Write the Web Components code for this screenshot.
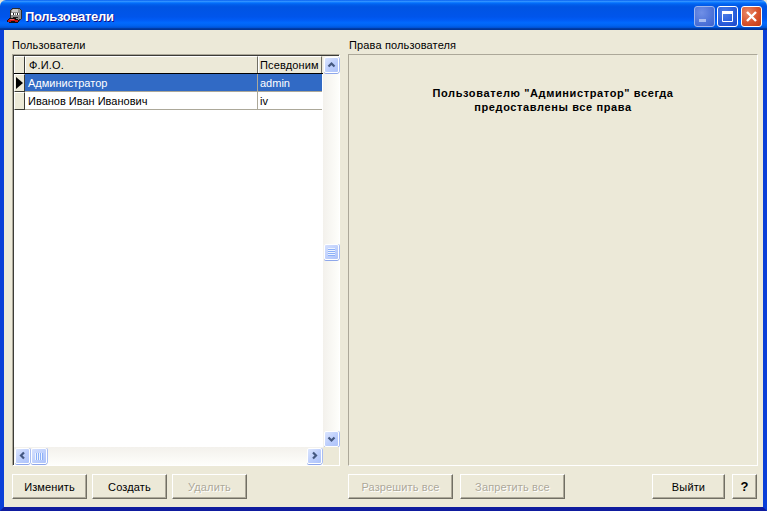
<!DOCTYPE html>
<html><head><meta charset="utf-8">
<style>
html,body{margin:0;padding:0;background:#e8e6d8;overflow:hidden}
body{width:767px;height:511px;font:11px "Liberation Sans",Arial,sans-serif;color:#000;letter-spacing:.14px}
</style></head><body>
<xp-window title="Пользователи">
  <xp-pane slot="left" label="Пользователи">
    <data-grid>
      <grid-row slot="rows" selected name="Администратор" nick="admin"></grid-row>
      <grid-row slot="rows" name="Иванов Иван Иванович" nick="iv"></grid-row>
    </data-grid>
  </xp-pane>
  <xp-pane slot="right" label="Права пользователя">
    <rights-panel>Пользователю "Администратор" всегда<br>предоставлены все права</rights-panel>
  </xp-pane>
  <xp-button slot="b1" style="width:75px">Изменить</xp-button>
  <xp-button slot="b1" style="width:75px">Создать</xp-button>
  <xp-button slot="b1" style="width:75px" disabled>Удалить</xp-button>
  <xp-button slot="b2" style="width:105px" disabled>Разрешить все</xp-button>
  <xp-button slot="b2" style="width:105px" disabled>Запретить все</xp-button>
  <xp-button slot="b3" style="width:73px">Выйти</xp-button>
  <xp-button slot="b3" style="width:25px"><b>?</b></xp-button>
</xp-window>
<script>
function def(name, css, html){
  customElements.define(name, class extends HTMLElement{
    connectedCallback(){
      if(this.shadowRoot) return;
      const r=this.attachShadow({mode:'open'});
      const h=typeof html==='function'?html(this):html;
      r.innerHTML='<style>'+css+'</style>'+h;
    }
  });
}
const esc=s=>(s||'').replace(/&/g,'&amp;').replace(/</g,'&lt;');

def('app-icon',':host{display:block;width:16px;height:16px;margin-top:2px}svg{display:block}',
`<svg width="16" height="16" viewBox="0 0 16 16" shape-rendering="crispEdges">
<path fill="#2e2e2e" d="M5 0h8v1h1v1h1v9h-1v1h-1v1H5v-1H4v-2H3V2h1V1h1z"/>
<path fill="#8e8e8e" d="M5 1h8v1h1v9h-2v1H6v-1H5v-1H4V2h1z"/>
<path fill="#c9c9c9" d="M6 1h5v3H5V2h1z"/>
<path fill="#fff" d="M4 5h4v2H4zM9 5h3v2H9z"/>
<path fill="#1c1c1c" d="M6 5h1v2H6zM10 5h1v2h-1zM6 9h5v1H6z"/>
<path fill="#111" d="M2 10h7v1h2v1h1v2h-1v1H2v-1H0v-2h1v-1h1z"/>
<path fill="#c81414" d="M2 11h6v1h3v2H8v-1H4v1H1v-2h1z"/>
<path fill="#ef6a6a" d="M3 11h4v1H3z"/>
</svg>`);

def('cap-button',`
:host{display:block;width:21px;height:21px;box-sizing:border-box;border:1px solid #fff;border-radius:3px;
background:radial-gradient(circle at 35% 30%,#4f7fe8 0,#2a5fdc 55%,#1c45c8 100%)}
:host([kind=min]){border-color:#9db5ee;background:radial-gradient(circle at 35% 30%,#6f8fe6 0,#4e73d8 60%,#3f62cc 100%)}
:host([kind=close]){background:radial-gradient(circle at 30% 30%,#e98a6a 0,#d8532c 55%,#c23a14 100%)}
svg{display:block}`,
t=>{const k=t.getAttribute('kind');
 const p=k==='min'?'<path fill="#a9bdf0" d="M4 12h7v3H4z"/>':
 k==='max'?'<path fill="none" stroke="#fff" d="M4.5 5.5h10v9h-10z"/><path fill="#fff" d="M4 4h11v3H4z"/>':
 '<path fill="none" stroke="#fff" stroke-width="2.4" d="M5 5l9 9M14 5l-9 9"/>';
 return `<svg width="19" height="19" viewBox="0 0 19 19">${p}</svg>`;});

def('xp-titlebar',`
:host{display:flex;align-items:center;height:30px;box-sizing:border-box;padding:0 5px 0 7px;
border-radius:6px 6px 0 0;
background:linear-gradient(180deg,#0058ee 0,#3593ff 4%,#288eff 6%,#127dff 8%,#036ffc 10%,#0262ee 14%,#0057e5 20%,#0054e3 24%,#0055eb 56%,#005bf5 66%,#026afe 76%,#0062ef 86%,#0052d6 92%,#0040ab 94%,#003092 100%)}
.t{margin:2px 0 0 2px;color:#fff;font:bold 13px "Liberation Sans",Arial,sans-serif;letter-spacing:-.3px;text-shadow:1px 1px #0f1089;flex:1;white-space:nowrap}
.b{display:flex;gap:2px;margin-top:2px}`,
t=>`<app-icon></app-icon><div class="t">${esc(t.getAttribute('title'))}</div>
<div class="b"><cap-button kind="min"></cap-button><cap-button kind="max"></cap-button><cap-button kind="close" style="margin-left:1px"></cap-button></div>`);

def('xp-window',`
:host{display:flex;flex-direction:column;width:767px;height:511px;box-sizing:border-box}
.body{flex:1;display:flex;border:solid #0831d9;border-width:0 4px 4px;background:#ece9d8;border-bottom-color:#0f1c9e;
border-left-color:#0a3fd8;border-right-color:#0a3fd8;
padding:8px 5px 8px 8px;flex-direction:column;gap:8px;min-height:0}
.main{flex:1;display:grid;grid-template-columns:328px 410px;gap:8px;min-height:0}
.btns{display:flex;height:25px}
.g{display:flex;gap:5px}
.g2{margin-left:101px;gap:7px}
.g3{margin-left:auto;gap:7px;margin-right:1px}`,
t=>`<xp-titlebar title="${esc(t.getAttribute('title'))}"></xp-titlebar>
<div class="body">
<div class="main"><slot name="left"></slot><slot name="right"></slot></div>
<div class="btns"><div class="g"><slot name="b1"></slot></div><div class="g g2"><slot name="b2"></slot></div><div class="g g3"><slot name="b3"></slot></div></div>
</div>`);

def('xp-pane',`
:host{display:flex;flex-direction:column;min-height:0;min-width:0}
.l{height:16px;line-height:14px;white-space:nowrap}
:host([slot=right]) .l{padding-left:1px}
.c{flex:1;display:flex;min-height:0}`,
t=>`<div class="l">${esc(t.getAttribute('label'))}</div><div class="c"><slot></slot></div>`);

def('xp-button',`
:host{display:flex;box-sizing:border-box;height:25px;align-items:center;justify-content:center;
background:#ece9d8;white-space:nowrap;color:#000;
border:1px solid;border-color:#fff #716f64 #716f64 #fff;box-shadow:inset -1px -1px #aca899}
:host([disabled]){color:#aca899;text-shadow:1px 1px #fff}
::slotted(b){font-size:13px}`,`<slot></slot>`);

def('scroll-btn',`
:host{display:block;box-sizing:border-box;width:15px;height:16px;border:1px solid #fff;border-radius:2px;
background:linear-gradient(135deg,#dbe5fe,#bccefc 55%,#aec3fa);box-shadow:0 1px #8ea7ea,1px 0 #a9bdf2;flex:none}
svg{display:block}`,
t=>{const d={up:'M3.5 8.5L6.5 5.5L9.5 8.5',down:'M3.5 5.5L6.5 8.5L9.5 5.5',left:'M8 3.5L5 6.5L8 9.5',right:'M5 3.5L8 6.5L5 9.5'}[t.getAttribute('dir')];
 return `<svg width="13" height="14" viewBox="0 0 13 14"><path d="${d}" fill="none" stroke="#445880" stroke-width="2.2"/></svg>`;});

def('scroll-thumb',`
:host{display:flex;box-sizing:border-box;flex:none;border:1px solid #fff;border-radius:2px;align-items:center;justify-content:center;
background:linear-gradient(135deg,#d5e0fe,#bccefc 60%,#aec3fa);box-shadow:0 1px #8ea7ea,1px 0 #a9bdf2}
:host([dir=v]){width:15px;height:16px;margin:auto 0}
:host([dir=h]){width:16px;height:16px}
svg{display:block}`,
t=>t.getAttribute('dir')==='v'?
 `<svg width="9" height="8" viewBox="0 0 9 8" shape-rendering="crispEdges"><path fill="#eef4fe" d="M1 0h7v1H1zM1 2h7v1H1zM1 4h7v1H1zM1 6h7v1H1z"/><path fill="#8cb0f8" d="M1 1h7v1H1zM1 3h7v1H1zM1 5h7v1H1zM1 7h7v1H1z"/></svg>`:
 `<svg width="8" height="9" viewBox="0 0 8 9" shape-rendering="crispEdges"><path fill="#eef4fe" d="M0 1h1v7H0zM2 1h1v7H2zM4 1h1v7H4zM6 1h1v7H6z"/><path fill="#8cb0f8" d="M1 1h1v7H1zM3 1h1v7H3zM5 1h1v7H5zM7 1h1v7H7z"/></svg>`);

def('grid-row',`
:host{display:grid;grid-template-columns:11px 233px 64px;height:18px;box-sizing:border-box;line-height:19px;white-space:nowrap;letter-spacing:0}
.i{box-sizing:border-box;background:#ece9d8;border:1px solid;border-color:#fff #3c3c38 #3c3c38 #fff;display:flex;align-items:center;justify-content:center}
.a,.b{box-sizing:border-box;border-bottom:1px solid #aca899;padding-left:2px;overflow:hidden}
.a{border-right:1px solid #aca899;padding-left:3px}
:host([selected]) .a,:host([selected]) .b{background:#316ac5;color:#fff}`,
t=>`<div class="i">${t.hasAttribute('selected')?'<svg width="7" height="12" viewBox="0 0 7 12"><path d="M0 0l7 6-7 6z"/></svg>':''}</div><div class="a">${esc(t.getAttribute('name'))}</div><div class="b">${esc(t.getAttribute('nick'))}</div>`);

def('data-grid',`
:host{flex:1;display:grid;grid-template-columns:1fr 16px;grid-template-rows:1fr 18px;box-sizing:border-box;min-height:0;
border:1px solid;border-color:#aca899 #fff #fff #aca899;box-shadow:inset 1px 1px #3c3c38;padding:1px 0 0 1px;background:#fff}
.cells{min-width:0;overflow:hidden;background:#fff}
.head{display:grid;grid-template-columns:11px 233px 64px;height:18px;box-sizing:border-box;background:#ece9d8;border-bottom:1px solid #000;line-height:16px}
.head div{box-sizing:border-box;border:1px solid;border-color:#fff #716f64 #716f64 #fff;padding-left:3px;border-bottom:0;white-space:nowrap;overflow:hidden}
.head div:first-child{border-right-color:#3c3c38}
.head div:last-child{padding-left:1px}
.vs{display:flex;flex-direction:column;background:linear-gradient(90deg,#f3f1ec,#fefefb);padding:1px 0 0 1px}
.hs{display:flex;align-items:flex-start;background:linear-gradient(180deg,#f3f1ec,#fefefb);padding:1px 0 0 1px;gap:1px}
.hs .sp{flex:1}
.cn{background:#ece9d8}`,
`<div class="cells"><div class="head"><div></div><div>Ф.И.О.</div><div>Псевдоним</div></div><slot name="rows"></slot></div>
<div class="vs"><scroll-btn dir="up"></scroll-btn><scroll-thumb dir="v"></scroll-thumb><scroll-btn dir="down"></scroll-btn></div>
<div class="hs"><scroll-btn dir="left"></scroll-btn><scroll-thumb dir="h"></scroll-thumb><div class="sp"></div><scroll-btn dir="right" style="margin-right:1px"></scroll-btn></div>
<div class="cn"></div>`);

def('rights-panel',`
:host{flex:1;display:block;box-sizing:border-box;border:1px solid;border-color:#aca899 #fff #fff #aca899;
padding-top:31px;text-align:center;font-weight:bold;line-height:14px;letter-spacing:.62px}`,`<slot></slot>`);
</script>
</body></html>
